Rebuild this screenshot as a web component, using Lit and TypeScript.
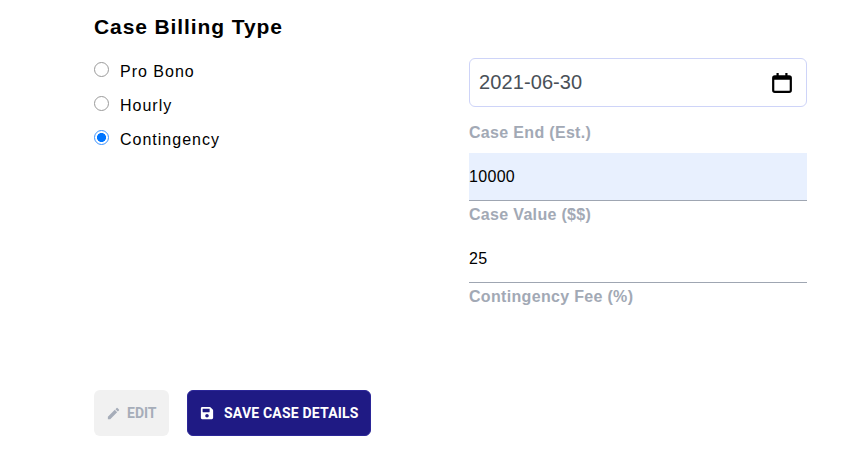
import { LitElement, html, css } from "lit";
import { customElement } from "lit/decorators.js";

@customElement("app-root")
export class AppRoot extends LitElement {
  static styles = css`
    :host {
      display: block;
      width: 863px;
      height: 452px;
      box-sizing: border-box;
      padding: 16px 56px 16px 94px;
      background: #fff;
      color: #000;
      font-family: "Liberation Sans", Arial, sans-serif;
      overflow: hidden;
    }
    .columns {
      display: grid;
      grid-template-columns: 375px 338px;
      height: 374px;
    }
    h2 {
      margin: 0 0 25px;
      font-size: 21px;
      line-height: 21px;
      font-weight: 700;
      letter-spacing: 0.9px;
    }
    .radios {
      display: flex;
      flex-direction: column;
      gap: 14px;
    }
    .radio {
      display: flex;
      align-items: center;
      height: 20px;
      font-size: 16px;
      letter-spacing: 1px;
      color: #000;
    }
    .radio input {
      appearance: none;
      box-sizing: border-box;
      width: 15px;
      height: 15px;
      margin: 0 11px 5px 0;
      border: 1.5px solid #9a9a9a;
      border-radius: 50%;
      background: #fff;
    }
    .radio input:checked {
      border-color: #3d94ff;
      background: radial-gradient(circle, #0075ff 0 4.2px, #fff 4.8px);
    }
    .right {
      padding-top: 42px;
      display: flex;
      flex-direction: column;
    }
    .date {
      display: flex;
      align-items: center;
      box-sizing: border-box;
      height: 49px;
      padding: 0 13px 0 9px;
      border: 1px solid #ced4f8;
      border-radius: 6px;
      font-size: 20px;
      color: #495057;
      letter-spacing: 0.1px;
    }
    .date input {
      flex: 1;
      min-width: 0;
      border: 0;
      outline: 0;
      padding: 0;
      background: transparent;
      font: inherit;
      color: inherit;
      letter-spacing: inherit;
    }
    .date svg {
      width: 22px;
      height: 22px;
      display: block;
    }
    .label {
      font-size: 16px;
      line-height: 18px;
      font-weight: 700;
      letter-spacing: 0.32px;
      color: #a2a9b5;
      margin-top: 5px;
    }
    .date + .label {
      margin-top: 17px;
      margin-bottom: 11px;
    }
    .field {
      display: block;
      box-sizing: border-box;
      width: 100%;
      height: 48px;
      border: 0;
      border-bottom: 1px solid #9fa6b2;
      outline: 0;
      padding: 0;
      margin: 0;
      font: 16px "Liberation Sans", Arial, sans-serif;
      letter-spacing: 0.32px;
      color: #000;
      background: #fff;
      border-radius: 0;
    }
    .field.filled {
      background: #e8f0fe;
    }
    .gap {
      margin-bottom: 11px;
    }
    .buttons {
      display: flex;
      gap: 18px;
    }
    button {
      display: flex;
      align-items: center;
      height: 46px;
      box-sizing: border-box;
      border-radius: 6px;
      font: 700 14px "Roboto", "Liberation Sans", sans-serif;
      letter-spacing: 0.2px;
      text-transform: uppercase;
      cursor: pointer;
    }
    .edit {
      width: 75px;
      padding: 0 0 0 12px;
      gap: 6px;
      background: #f1f1f1;
      border: 0;
      color: #a6adb9;
      letter-spacing: 0;
    }
    .edit svg {
      width: 15px;
      height: 15px;
    }
    .save {
      width: 184px;
      padding: 0 0 0 12px;
      gap: 10px;
      background: #1f1a84;
      border: 1px solid #2b2698;
      color: #fff;
    }
    .save svg {
      width: 14px;
      height: 14px;
    }
  `;

  render() {
    return html`
      <div class="columns">
        <div>
          <h2>Case Billing Type</h2>
          <div class="radios">
            <label class="radio"><input type="radio" name="billing" />Pro Bono</label>
            <label class="radio"><input type="radio" name="billing" />Hourly</label>
            <label class="radio"><input type="radio" name="billing" checked />Contingency</label>
          </div>
        </div>
        <div class="right">
          <div class="date">
            <input type="text" value="2021-06-30" />
            <svg viewBox="0 0 20 20" aria-hidden="true">
              <path fill="#000" d="M5 1h2v2h6V1h2v2h1.500A2.500 2.500 0 0 1 19 5.500v11a2.500 2.500 0 0 1-2.500 2.500h-13A2.500 2.500 0 0 1 1 16.500v-11A2.500 2.500 0 0 1 3.500 3H5V1zm-2 6v9.500c0 .3.200.5.500.5h13c.3 0 .5-.2.5-.5V7H3z"/>
            </svg>
          </div>
          <div class="label">Case End (Est.)</div>
          <input class="field filled" type="text" value="10000" />
          <div class="label gap">Case Value ($$)</div>
          <input class="field" type="text" value="25" />
          <div class="label">Contingency Fee (%)</div>
        </div>
      </div>
      <div class="buttons">
        <button class="edit" disabled>
          <svg viewBox="0 0 24 24" aria-hidden="true">
            <path fill="#a6adb9" d="M3 17.250V21h3.750L17.810 9.940l-3.750-3.750L3 17.250zM20.710 7.040a1 1 0 0 0 0-1.410l-2.340-2.340a1 1 0 0 0-1.410 0l-1.830 1.830 3.750 3.750 1.830-1.830z"/>
          </svg>
          Edit
        </button>
        <button class="save">
          <svg viewBox="0 0 448 512" aria-hidden="true">
            <path fill="#fff" d="M433.900 129.900l-83.900-83.900A48 48 0 0 0 316.100 32H48C21.500 32 0 53.500 0 80v352c0 26.500 21.500 48 48 48h352c26.500 0 48-21.500 48-48V163.900a48 48 0 0 0-14.100-34zM224 416c-35.300 0-64-28.700-64-64 0-35.300 28.700-64 64-64s64 28.700 64 64c0 35.300-28.700 64-64 64zm96-304.500V212c0 6.600-5.400 12-12 12H76c-6.600 0-12-5.400-12-12V108c0-6.600 5.400-12 12-12h228.500c3.200 0 6.200 1.300 8.500 3.500l3.500 3.500c2.200 2.200 3.500 5.300 3.500 8.500z"/>
          </svg>
          Save Case Details
        </button>
      </div>
    `;
  }
}
